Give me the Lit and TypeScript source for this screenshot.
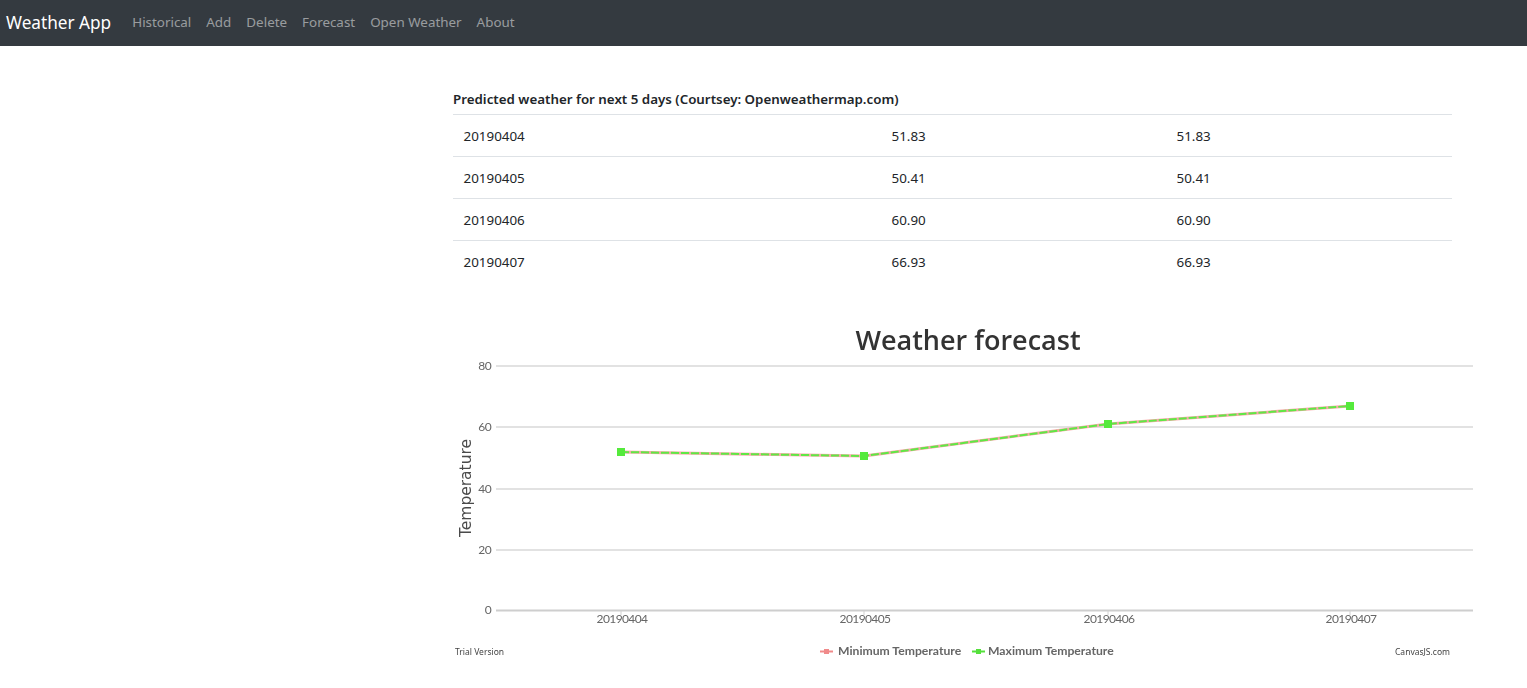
import { LitElement, css, html, svg } from 'lit';
import { customElement } from 'lit/decorators.js';

const NAV_LINKS = ['Historical', 'Add', 'Delete', 'Forecast', 'Open Weather', 'About'];

const ROWS = [
  { date: '20190404', min: '51.83', max: '51.83' },
  { date: '20190405', min: '50.41', max: '50.41' },
  { date: '20190406', min: '60.90', max: '60.90' },
  { date: '20190407', min: '66.93', max: '66.93' },
];

// chart coordinates are relative to the svg box, which starts at x=453, y=320
const GRID = [
  { label: '80', y: 46 },
  { label: '60', y: 107 },
  { label: '40', y: 169 },
  { label: '20', y: 230 },
];
const POINTS = [
  { x: 168, y: 132, label: '20190404' },
  { x: 411, y: 136, label: '20190405' },
  { x: 655, y: 104, label: '20190406' },
  { x: 897, y: 86, label: '20190407' },
];

@customElement('weather-chart')
class WeatherChart extends LitElement {
  static styles = css`
    :host {
      display: block;
    }
    svg {
      display: block;
      filter: blur(0.6px);
    }
    text {
      font-family: 'Lato', 'Liberation Sans', sans-serif;
    }
    .title {
      font-family: 'Open Sans', sans-serif;
      font-size: 27px;
      font-weight: 600;
      fill: #333;
    }
    .tick {
      font-size: 12px;
      letter-spacing: -0.6px;
      fill: #666;
    }
    .axis-title {
      font-family: 'DejaVu Sans', sans-serif;
      font-size: 15.500px;
      fill: #4a4a4a;
    }
    .legend {
      font-size: 12.200px;
      font-weight: 700;
      fill: #666;
    }
    .credit {
      font-family: 'Noto Sans', sans-serif;
      font-size: 8.500px;
      fill: #444;
    }
  `;

  render() {
    const line = POINTS.map((p) => `${p.x},${p.y}`).join(' ');
    return html`
      <svg width="1074" height="350" viewBox="0 0 1074 350">
        <text class="title" x="515" y="30" text-anchor="middle">Weather forecast</text>
        ${GRID.map(
          (g) => svg`
            <line x1="43" x2="1020" y1=${g.y} y2=${g.y} stroke="#e2e2e2" stroke-width="2" />
            <text class="tick" x="38" y=${g.y + 4} text-anchor="end">${g.label}</text>
          `
        )}
        <line x1="43" x2="1020" y1="290.500" y2="290.500" stroke="#cecece" stroke-width="2" />
        <text class="tick" x="38" y="294" text-anchor="end">0</text>
        <text class="axis-title" transform="translate(18 168) rotate(-90)" text-anchor="middle">Temperature</text>
        ${POINTS.map(
          (p) => svg`
            <line x1=${p.x} x2=${p.x} y1="291" y2="295" stroke="#d2d2d2" />
            <text class="tick" x=${p.x + 1} y="303" text-anchor="middle">${p.label}</text>
          `
        )}
        <polyline points=${line} fill="none" stroke="#f7a8a8" stroke-width="3" />
        <polyline points=${line} fill="none" stroke="#5fe845" stroke-width="2" stroke-dasharray="8 2" />
        ${POINTS.map(
          (p) => svg`<rect x=${p.x - 4} y=${p.y - 4} width="8" height="8" fill="#55ea3c" />`
        )}
        <text class="credit" x="2" y="335">Trial Version</text>
        <line x1="367" x2="380" y1="331.500" y2="331.500" stroke="#f08a8a" stroke-width="2" />
        <rect x="371" y="329" width="5" height="5" fill="#f08a8a" />
        <text class="legend" x="385" y="335">Minimum Temperature</text>
        <line x1="519" x2="532" y1="331.500" y2="331.500" stroke="#55e03c" stroke-width="2" />
        <rect x="523" y="329" width="5" height="5" fill="#55e03c" />
        <text class="legend" x="535" y="335">Maximum Temperature</text>
        <text class="credit" x="942" y="335">CanvasJS.com</text>
      </svg>
    `;
  }
}

@customElement('app-root')
class AppRoot extends LitElement {
  static styles = css`
    :host {
      display: block;
      font-family: 'Noto Sans', 'Open Sans', sans-serif;
      font-size: 13.400px;
      color: #212529;
      background: #fff;
    }
    .navbar {
      display: flex;
      align-items: center;
      box-sizing: border-box;
      height: 46px;
      padding: 0 6px 2px;
      background: #343a40;
    }
    .brand {
      font-size: 17.200px;
      color: #fff;
      margin-right: 21px;
    }
    .links {
      display: flex;
      gap: 15px;
    }
    .links a {
      color: rgba(255, 255, 255, 0.5);
      text-decoration: none;
    }
    .content {
      padding: 42px 0 0 453px;
    }
    table {
      width: 999px;
      border-collapse: collapse;
      table-layout: fixed;
    }
    th {
      height: 22px;
      padding: 0 0 4px;
      font-size: 13.340px;
      font-weight: 600;
      text-align: left;
      white-space: nowrap;
    }
    td {
      height: 41px;
      padding: 0 0 0 10.500px;
      border-top: 1px solid #dee2e6;
    }
    .col-date {
      width: 428px;
    }
    .col-min {
      width: 285px;
    }
    weather-chart {
      margin-top: 38px;
    }
  `;

  render() {
    return html`
      <nav class="navbar">
        <span class="brand">Weather App</span>
        <div class="links">
          ${NAV_LINKS.map((link) => html`<a href="#">${link}</a>`)}
        </div>
      </nav>
      <main class="content">
        <table>
          <colgroup>
            <col class="col-date" />
            <col class="col-min" />
            <col />
          </colgroup>
          <thead>
            <tr>
              <th colspan="3">Predicted weather for next 5 days (Courtsey: Openweathermap.com)</th>
            </tr>
          </thead>
          <tbody>
            ${ROWS.map(
              (row) => html`
                <tr>
                  <td>${row.date}</td>
                  <td>${row.min}</td>
                  <td>${row.max}</td>
                </tr>
              `
            )}
          </tbody>
        </table>
        <weather-chart></weather-chart>
      </main>
    `;
  }
}
